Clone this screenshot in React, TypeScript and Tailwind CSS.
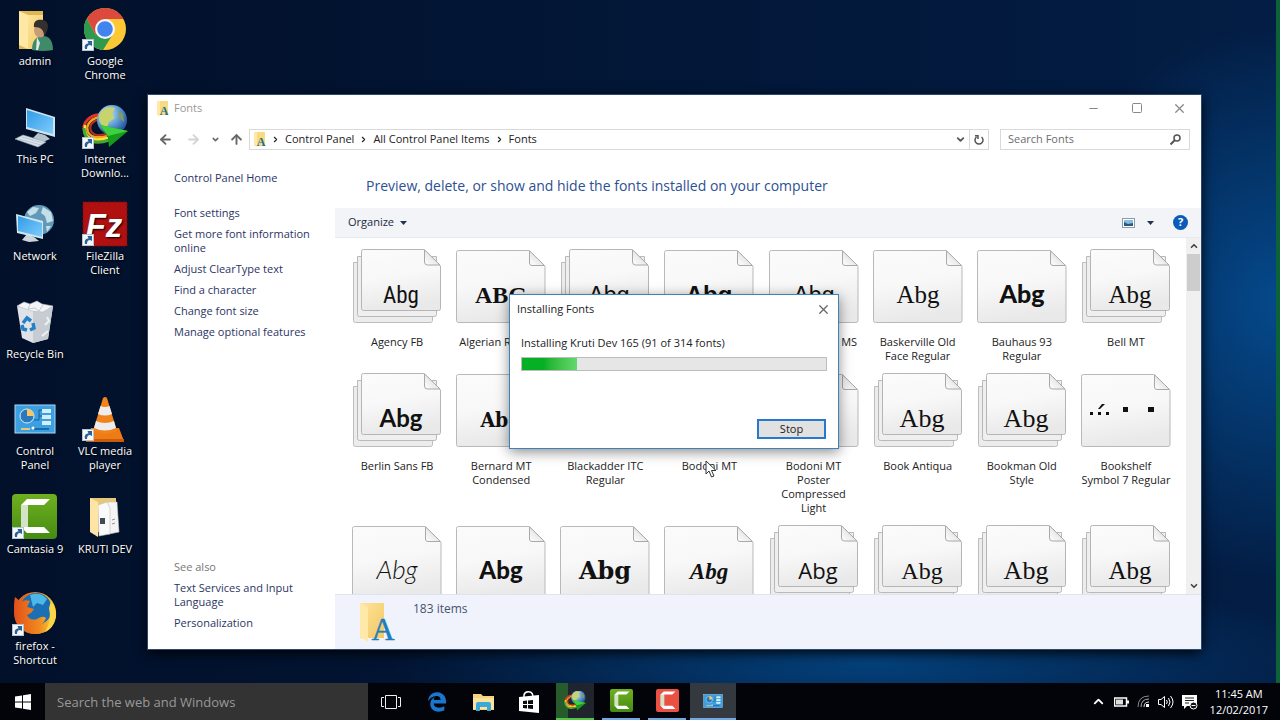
import { ReactNode } from "react";
import { FaEdgeLegacy } from "react-icons/fa";
import {
  ArrowLeft,
  ArrowRight,
  ArrowUp,
  ChevronDown,
  ChevronRight,
  ChevronUp,
  Minus,
  Square,
  X,
} from "lucide-react";

type FontTile = {
  name?: string;
  stack?: boolean;
  font?: string;
  size?: number;
  weight?: number;
  italic?: boolean;
  sample?: string;
  symbols?: boolean;
};

const fontTiles: FontTile[] = [
  { name: "Agency FB", stack: true, font: "Roboto Condensed, Open Sans Condensed, DejaVu Sans Condensed", size: 23 },
  { name: "Algerian Regular", font: "Liberation Serif", size: 24, weight: 700, sample: "ABG" },
  { stack: true, font: "Liberation Sans", size: 23 },
  { font: "Liberation Sans", size: 24, weight: 700 },
  { name: "Arial Unicode MS", font: "Liberation Sans", size: 23 },
  { name: "Baskerville Old\nFace Regular", font: "Liberation Serif", size: 25 },
  { name: "Bauhaus 93\nRegular", font: "Lato", size: 25, weight: 900 },
  { name: "Bell MT", stack: true, font: "Liberation Serif", size: 25 },
  { name: "Berlin Sans FB", stack: true, font: "Lato", size: 24, weight: 700 },
  { name: "Bernard MT\nCondensed", font: "DejaVu Serif Condensed", size: 21, weight: 700 },
  { name: "Blackadder ITC\nRegular", font: "Liberation Serif", size: 24, italic: true },
  { name: "Bodoni MT", stack: true, font: "Liberation Serif", size: 25 },
  { name: "Bodoni MT\nPoster\nCompressed\nLight", font: "Liberation Serif", size: 25 },
  { name: "Book Antiqua", stack: true, font: "Liberation Serif", size: 26 },
  { name: "Bookman Old\nStyle", stack: true, font: "Liberation Serif", size: 26 },
  { name: "Bookshelf\nSymbol 7 Regular", symbols: true },
  { font: "Lato", size: 26, weight: 300, italic: true },
  { font: "Lato", size: 24, weight: 900 },
  { font: "DejaVu Serif", size: 24, weight: 700 },
  { font: "Liberation Serif", size: 23, weight: 700, italic: true },
  { stack: true, font: "Open Sans", size: 22 },
  { stack: true, font: "Liberation Serif", size: 24 },
  { stack: true, font: "Liberation Serif", size: 26 },
  { stack: true, font: "Liberation Serif", size: 25 },
];

function FontPreview({ tile }: { tile: FontTile }) {
  return (
    <svg viewBox="0 0 90 74" className="h-[74px] w-[90px] shrink-0">
      {tile.stack ? (
        <>
          <path d="M1.5 13.5H80.5V71.5Q80.5 73.5 78.5 73.5H3.5Q1.5 73.5 1.5 71.5Z" fill="#ececec" stroke="#bdbdbd" />
          <path d="M5.5 7.5H84.5V65.5Q84.5 67.5 82.5 67.5H7.5Q5.5 67.5 5.5 65.5Z" fill="#efefef" stroke="#b9b9b9" />
          <path d="M9.5 2.5Q9.5 .5 11.5 .5H72L88.5 17V59.5Q88.5 61.5 86.5 61.5H11.5Q9.5 61.5 9.5 59.5Z" fill="url(#paper)" stroke="#b5b5b5" />
          <path d="M72.5 .8V13Q72.5 16 75.5 16H88Z" fill="url(#fold)" stroke="#a8a8a8" />
        </>
      ) : (
        <>
          <path d="M.5 3.5Q.5 1.5 2.5 1.5H73L89 17.5V71.5Q89 73.5 87 73.5H2.5Q.5 73.5 .5 71.5Z" fill="url(#paper)" stroke="#b9b9b9" />
          <path d="M73.5 1.8V14Q73.5 16.5 76 16.5H88.5Z" fill="url(#fold)" stroke="#a8a8a8" />
        </>
      )}
      {tile.symbols ? (
        <g fill="#111">
          <rect x="9" y="39" width="3" height="3" />
          <rect x="17" y="39" width="3" height="3" />
          <rect x="25" y="39" width="3" height="3" />
          <path d="M17 36L21 31H24L19 36Z" />
          <rect x="42" y="34" width="5" height="5" />
          <rect x="67" y="34" width="6" height="5" />
        </g>
      ) : (
        <text
          x={tile.stack ? 49 : 45}
          y="54"
          textAnchor="middle"
          fill="#111"
          fontFamily={`${tile.font}, sans-serif`}
          fontSize={tile.size}
          fontWeight={tile.weight || 400}
          fontStyle={tile.italic ? "italic" : "normal"}
        >
          {tile.sample || "Abg"}
        </text>
      )}
    </svg>
  );
}

function Gradients() {
  return (
    <svg className="absolute h-0 w-0" aria-hidden="true">
      <defs>
        <linearGradient id="paper" x1="0" y1="0" x2=".2" y2="1">
          <stop offset="0" stopColor="#fbfbfb" />
          <stop offset=".5" stopColor="#f8f8f8" />
          <stop offset="1" stopColor="#e9e9e9" />
        </linearGradient>
        <linearGradient id="fold" x1="0" y1="1" x2="1" y2="0">
          <stop offset="0" stopColor="#ffffff" />
          <stop offset="1" stopColor="#d2d2d2" />
        </linearGradient>
        <linearGradient id="screen" x1="0" y1="0" x2="1" y2="1">
          <stop offset="0" stopColor="#2f9be8" />
          <stop offset="1" stopColor="#7fcdfb" />
        </linearGradient>
        <radialGradient id="globe" cx=".35" cy=".3" r=".8">
          <stop offset="0" stopColor="#cfe6f7" />
          <stop offset=".5" stopColor="#5f9ed6" />
          <stop offset="1" stopColor="#173f8a" />
        </radialGradient>
        <linearGradient id="folder" x1="0" y1="0" x2="1" y2="1">
          <stop offset="0" stopColor="#ffe39a" />
          <stop offset="1" stopColor="#f0c964" />
        </linearGradient>
        <linearGradient id="fox" x1="0" y1="0" x2="1" y2="0">
          <stop offset="0" stopColor="#e2501b" />
          <stop offset=".6" stopColor="#f08a1d" />
          <stop offset="1" stopColor="#fbd53a" />
        </linearGradient>
        <linearGradient id="camtasia" x1="0" y1="0" x2="0" y2="1">
          <stop offset="0" stopColor="#6fb020" />
          <stop offset="1" stopColor="#458b12" />
        </linearGradient>
      </defs>
    </svg>
  );
}

function DesktopSvg({ children }: { children: ReactNode }) {
  return (
    <svg viewBox="0 0 46 46" className="h-[46px] w-[46px] overflow-visible">
      {children}
    </svg>
  );
}

function UserFolder() {
  return (
    <DesktopSvg>
      <path d="M7 3H31V41H7Z" fill="#dfb654" />
      <path d="M7 3L16 7V41L7 37Z" fill="#ffe8a4" />
      <path d="M16 7H31V41H16Z" fill="url(#folder)" />
      <path d="M20 42C20 33 24 28 31 28C38 28 41 34 41 42Q31 44 20 42Z" fill="#3f8a68" />
      <path d="M25 29L28 35L26 42H24Z" fill="#dcebe6" />
      <ellipse cx="28" cy="22" rx="6" ry="7.5" fill="#c99b79" />
      <path d="M22 19C21 12 27 11 31 12C37 13 37 20 34 25L32 28C32 22 29 19 22 19Z" fill="#34302e" />
    </DesktopSvg>
  );
}

function Chrome() {
  return (
    <DesktopSvg>
      <circle cx="23" cy="21" r="21" fill="#fcc934" />
      <path d="M23 21L13.5 26.5L4.8 10.5A21 21 0 0 0 21 42L31 26Z" fill="#2d9a50" />
      <path d="M23 11H41.5A21 21 0 0 0 4.8 10.5L13.5 26.5L23 21Z" fill="#db4a3c" />
      <circle cx="23" cy="21" r="10" fill="#f4f6f8" />
      <circle cx="23" cy="21" r="7.8" fill="#4284ee" />
    </DesktopSvg>
  );
}

function ThisPc() {
  return (
    <DesktopSvg>
      <path d="M26 27L33 29L38 33L31 36L21 32Z" fill="#b6c3cd" />
      <path d="M14 2L43 11V31L14 23Z" fill="#cfe3ee" />
      <path d="M15 4L41 12V28L15 21Z" fill="url(#screen)" />
      <path d="M3 33L11 29L34 36L26 41Z" fill="#dbe3ea" stroke="#94a5b3" strokeWidth=".6" />
      <path d="M7 33L29 39M10 31L31 37" stroke="#aab7c3" strokeWidth=".7" />
    </DesktopSvg>
  );
}

function DownloaderShapes() {
  return (
    <>
      <g fill="none">
        <path d="M22 9C8 7 -1 17 3 27C6 35 17 35 26 32" stroke="#e2342a" strokeWidth="3" />
        <path d="M22 11C11 10 3 18 6 26C9 32 17 32 25 30" stroke="#f5a21c" strokeWidth="2.5" />
        <path d="M22 13C13 13 6 18 9 25C11 29 17 30 24 28" stroke="#b8331f" strokeWidth="2" />
        <path d="M3 19C1 32 10 36 26 32" stroke="#f4e83b" strokeWidth="2.5" />
        <path d="M2 22C2 36 14 39 27 34" stroke="#43a832" strokeWidth="3" />
      </g>
      <circle cx="30" cy="14" r="15" fill="url(#globe)" />
      <path d="M17 9C20 2 28 0 33 2L30 8L33 12L27 16L25 22C20 21 16 16 17 9Z" fill="#c7d36c" />
      <path d="M36 4L41 8L42 16L37 12Z" fill="#7e9b68" />
      <path d="M18 19L46 25L27 41L26 31Z" fill="#169b1d" />
      <path d="M18 19L46 25L26 30Z" fill="#3fd03d" />
    </>
  );
}

function Downloader() {
  return (
    <DesktopSvg>
      <DownloaderShapes />
    </DesktopSvg>
  );
}

function Network() {
  return (
    <DesktopSvg>
      <circle cx="27" cy="17" r="15" fill="#6299b8" />
      <path d="M15 9L21 4L27 5L24 10L18 13ZM31 4L39 9L41 18L35 20L33 13L29 10ZM34 23L39 23L35 29Z" fill="#c5dfe9" />
      <path d="M15 31L22 34L27 38L17 39L10 37Z" fill="#ccd5dc" />
      <path d="M4 11L31 18V36L5 30Z" fill="#d2e6f0" />
      <path d="M6 13L30 20V34L6 28Z" fill="url(#screen)" />
    </DesktopSvg>
  );
}

function FileZilla() {
  return (
    <DesktopSvg>
      <rect x="1" y="-1" width="44" height="44" fill="#b01010" stroke="#7e0a0a" strokeDasharray="3 2" />
      <text x="22" y="34" textAnchor="middle" fill="#fff" fontFamily="Liberation Sans, sans-serif" fontSize="33" fontWeight="700" fontStyle="italic">
        Fz
      </text>
    </DesktopSvg>
  );
}

function RecycleBin() {
  return (
    <DesktopSvg>
      <path d="M5 5L21 8L41 5L36 38L21 42L10 37Z" fill="#dfe3e7" />
      <path d="M21 8L41 5L36 38L21 42Z" fill="#c6ccd2" />
      <path d="M5 5L12 1L18 3L25 0L30 3L41 5L31 11L20 10Z" fill="#f4f5f6" stroke="#b6bec5" strokeWidth=".6" />
      <path d="M18 3L16 8L23 7L27 10L31 4" stroke="#c4c9ce" fill="none" />
      <g fill="none" stroke="#2580cc" strokeWidth="3.5">
        <path d="M11 22L15 17L19 20" />
        <path d="M21 22L22 27L18 29" />
        <path d="M15 29L11 28L10 24" />
      </g>
      <path d="M35 16L37 20L33 24M30 35L36 30" stroke="#eef1f3" strokeWidth="2" fill="none" />
    </DesktopSvg>
  );
}

function PanelShapes() {
  return (
    <>
      <rect x="3" y="7" width="40" height="28" fill="#3b9fe0" stroke="#a7d9f5" />
      <circle cx="15" cy="18" r="7" fill="#2b78bd" stroke="#d4effc" />
      <path d="M15 18V11A7 7 0 0 1 22 18Z" fill="#f7c566" />
      <path d="M22 22H27V12H30M27 18H30" stroke="#1c5f9b" fill="none" />
      <rect x="30" y="11" width="9" height="4" fill="#d3effc" />
      <rect x="30" y="17" width="9" height="4" fill="#d3effc" />
      <rect x="30" y="23" width="9" height="4" fill="#d3effc" />
      <path d="M9 31H18" stroke="#eac479" strokeWidth="2" />
      <path d="M22 31H37" stroke="#196bb0" strokeWidth="2" />
      <circle cx="21" cy="30" r="1.5" fill="#fff" />
    </>
  );
}

function ControlPanel() {
  return (
    <DesktopSvg>
      <PanelShapes />
    </DesktopSvg>
  );
}

function Vlc() {
  return (
    <DesktopSvg>
      <path d="M9 30H37L42 43H4Z" fill="#ee7c16" />
      <path d="M4 41H42V44H4Z" fill="#c85c0c" />
      <path d="M21 0Q23-2 25 0L35 33Q23 39 11 33Z" fill="#f2821b" />
      <path d="M18.5 8Q23 10 27.5 8L30 16Q23 19 16 16Z" fill="#ededed" />
      <path d="M14 23Q23 27 32 23L34 30Q23 35 12 30Z" fill="#ededed" />
    </DesktopSvg>
  );
}

function CamtasiaShapes({ fill }: { fill: string }) {
  return (
    <>
      <rect y="-2" width="45" height="45" rx="4" fill={fill} />
      <path d="M9 9L15 3H38L32 9H16V31H32L38 37H15L9 31Z" fill="#fff" />
      <path d="M9 9H16V31H9Z" fill="#c9dcb8" fillOpacity=".8" />
    </>
  );
}

function Camtasia() {
  return (
    <DesktopSvg>
      <CamtasiaShapes fill="url(#camtasia)" />
    </DesktopSvg>
  );
}

function DocumentFolder() {
  return (
    <DesktopSvg>
      <path d="M8 2H34V36H8Z" fill="#e8c777" />
      <path d="M25 6L35 6L37 36L27 38Z" fill="#f4f4f4" stroke="#c5c5c5" strokeWidth=".6" />
      <path d="M16 9L25 6L28 12V38L17 40Z" fill="#fafafa" stroke="#bdbdbd" strokeWidth=".6" />
      <rect x="18" y="22" width="5" height="6" fill="#454b54" />
      <path d="M30 24L33 23M30 28L33 27" stroke="#8e949a" />
      <path d="M8 2L16 6V41L8 36Z" fill="#ffe5a5" />
    </DesktopSvg>
  );
}

function Firefox() {
  return (
    <DesktopSvg>
      <circle cx="23" cy="20" r="21" fill="url(#fox)" />
      <circle cx="24" cy="16" r="16" fill="#1b6fb5" />
      <path d="M18 2Q28-2 35 6L31 12L25 10L21 14Z" fill="#4bb8e8" />
      <path d="M3 4L9 9Q13 6 18 8L15 14L22 16L19 20L15 22Q18 28 25 26Q31 22 34 25Q30 35 20 33Q26 38 35 33Q42 27 40 13L38 7Q45 15 44 24Q41 40 24 41Q6 40 3 25Q1 12 3 4Z" fill="url(#fox)" />
      <path d="M39 8Q45 17 43 26Q41 35 33 39Q40 27 37 15Z" fill="#fbd647" />
    </DesktopSvg>
  );
}

function ShortcutArrow() {
  return (
    <svg viewBox="0 0 12 12" className="h-3 w-3">
      <rect x=".5" y=".5" width="11" height="11" fill="#f5f8fa" stroke="#b8c4cd" />
      <path d="M3 10C2 6 4 4.5 6.5 4.5L5.5 2H10V7L8 6C6 6 5 7.5 5 10Z" fill="#2c6196" />
    </svg>
  );
}

function FontFolder({ className }: { className: string }) {
  return (
    <svg viewBox="0 0 36 40" className={className}>
      <path d="M1 1H25V36H1Z" fill="url(#folder)" />
      <path d="M1 1L9 5V40L1 35Z" fill="#ffe9a8" />
      <text x="24" y="38" textAnchor="middle" fill="#1f7dbc" stroke="#1f7dbc" strokeWidth=".5" fontFamily="Liberation Serif, serif" fontSize="32">A</text>
    </svg>
  );
}

function SmallFontFolder({ className }: { className: string }) {
  return (
    <svg viewBox="0 0 12 15" className={className}>
      <path d="M0 0H11V14H0Z" fill="#f8da80" />
      <path d="M0 0H3V15L0 14Z" fill="#ffe9a8" />
      <text x="7" y="14" textAnchor="middle" fill="#1f6f8f" fontFamily="Liberation Serif, serif" fontSize="12" fontWeight="700">A</text>
    </svg>
  );
}

type DesktopItem = { label: string; icon: ReactNode; shortcut?: boolean } | null;

const desktopItems: DesktopItem[] = [
  { label: "admin", icon: <UserFolder /> },
  { label: "Google\nChrome", icon: <Chrome />, shortcut: true },
  { label: "This PC", icon: <ThisPc /> },
  { label: "Internet\nDownlo...", icon: <Downloader />, shortcut: true },
  { label: "Network", icon: <Network /> },
  { label: "FileZilla\nClient", icon: <FileZilla />, shortcut: true },
  { label: "Recycle Bin", icon: <RecycleBin /> },
  null,
  { label: "Control\nPanel", icon: <ControlPanel /> },
  { label: "VLC media\nplayer", icon: <Vlc />, shortcut: true },
  { label: "Camtasia 9", icon: <Camtasia />, shortcut: true },
  { label: "KRUTI DEV", icon: <DocumentFolder /> },
  { label: "firefox -\nShortcut", icon: <Firefox />, shortcut: true },
];

function Desktop() {
  return (
    <ul className="grid flex-1 grid-cols-[70px_70px] grid-rows-7">
      {desktopItems.map((item, i) => (
        <li key={i}>
          {item && (
            <button className="flex w-full flex-col items-center pt-2 text-[11px] leading-[14px] text-white [text-shadow:1px_1px_2px_#000]">
              <span className="relative">
                {item.icon}
                {item.shortcut && (
                  <span className="absolute top-[31px] left-0">
                    <ShortcutArrow />
                  </span>
                )}
              </span>
              <span className="whitespace-pre-line">{item.label}</span>
            </button>
          )}
        </li>
      ))}
    </ul>
  );
}

const sideLinks = [
  "Font settings",
  "Get more font information online",
  "Adjust ClearType text",
  "Find a character",
  "Change font size",
  "Manage optional features",
];

function Sidebar() {
  return (
    <aside className="flex w-[187px] shrink-0 flex-col justify-between pt-[15px] pr-5 pb-[19px] pl-[26px] text-[11px] leading-[14px] text-[#2c3565]">
      <nav className="flex flex-col items-start gap-[7px]">
        <a href="#home" className="mb-[14px]">Control Panel Home</a>
        {sideLinks.map((link) => (
          <a href="#link" key={link}>{link}</a>
        ))}
      </nav>
      <nav className="flex flex-col items-start gap-[7px]">
        <span className="text-[#777]">See also</span>
        <a href="#text">Text Services and Input Language</a>
        <a href="#personalization">Personalization</a>
      </nav>
    </aside>
  );
}

function Crumb({ label }: { label: string }) {
  return (
    <>
      <ChevronRight size={9} strokeWidth={3} className="mx-1" />
      <button className="px-px">{label}</button>
    </>
  );
}

function AddressRow() {
  return (
    <div className="flex h-[21px] items-center pr-[11px] text-[#666]">
      <div className="flex w-[101px] items-center pl-[10px]">
        <button aria-label="Back" className="w-7"><ArrowLeft size={15} strokeWidth={3} /></button>
        <button aria-label="Forward" className="w-[25px] text-[#d4d4d4]"><ArrowRight size={15} strokeWidth={3} /></button>
        <button aria-label="Recent locations" className="w-[18px]"><ChevronDown size={9} strokeWidth={4} /></button>
        <button aria-label="Up"><ArrowUp size={15} strokeWidth={3} /></button>
      </div>
      <div className="flex h-full flex-1 items-center border border-[#d9d9d9] text-[11px] text-[#222]">
        <SmallFontFolder className="mr-px ml-1 h-[15px] w-3" />
        <Crumb label="Control Panel" />
        <Crumb label="All Control Panel Items" />
        <Crumb label="Fonts" />
        <button aria-label="Previous locations" className="ml-auto px-[3px] text-[#555]"><ChevronDown size={11} strokeWidth={4} /></button>
        <button aria-label="Refresh" className="flex h-full w-[19px] items-center justify-center border-l border-[#d9d9d9] text-[#555]">
          <svg viewBox="0 0 10 11" className="h-[11px] w-[10px]" fill="none" stroke="currentColor" strokeWidth="1.5">
            <path d="M7.5 3A4 4 0 1 1 2.5 3M1 1.7H4V5" />
          </svg>
        </button>
      </div>
      <div className="ml-[11px] flex h-full w-[190px] items-center border border-[#d9d9d9] pr-2 pl-[7px]">
        <input aria-label="Search Fonts" placeholder="Search Fonts" className="min-w-0 flex-1 text-[11px] outline-none placeholder:text-[#6d6d6d]" />
        <svg viewBox="0 0 11 11" className="h-[11px] w-[11px]" fill="none" stroke="#555" strokeWidth="1.5">
          <circle cx="7" cy="4" r="3" />
          <path d="M5 6L.5 10.5" strokeWidth="2" />
        </svg>
      </div>
    </div>
  );
}

function Toolbar() {
  return (
    <div className="flex h-[30px] shrink-0 items-center border-b border-[#e6eaf1] bg-[#f2f4f8] px-[13px] text-[11px] text-[#222b3f]">
      <button className="flex items-center gap-[6px]">
        Organize
        <svg viewBox="0 0 7 4" className="h-1 w-[7px]"><path d="M0 0H7L3.5 4Z" fill="#27334d" /></svg>
      </button>
      <button aria-label="Change view" className="ml-auto flex items-center gap-3">
        <svg viewBox="0 0 13 10" className="h-[10px] w-[13px]">
          <rect x=".5" y=".5" width="12" height="9" fill="#fff" stroke="#8d9cac" />
          <rect x="2" y="2" width="9" height="6" fill="#86bde4" />
          <path d="M2 8V4L6 6L11 5V8Z" fill="#2d5877" />
        </svg>
        <svg viewBox="0 0 7 4" className="h-1 w-[7px]"><path d="M0 0H7L3.5 4Z" fill="#27334d" /></svg>
      </button>
      <button aria-label="Help" className="ml-[19px] flex h-[15px] w-[15px] items-center justify-center rounded-full bg-[#0b5cb8] text-[11px] font-bold text-white">
        ?
      </button>
    </div>
  );
}

function FontsWindow() {
  return (
    <section className="absolute top-[95px] right-[79px] bottom-[71px] left-[148px] flex flex-col bg-white shadow-[0_0_0_1px_#2d486c,0_3px_12px_#000]">
      <header className="flex h-[26px] shrink-0 items-center pl-[9px] text-[11px] text-[#999]">
        <SmallFontFolder className="mr-[5px] h-[15px] w-3" />
        <h1>Fonts</h1>
        <div className="ml-auto flex h-full text-[#888]">
          <button aria-label="Minimize" className="flex w-[43px] items-center justify-center"><Minus size={13} strokeWidth={2} /></button>
          <button aria-label="Maximize" className="flex w-[43px] items-center justify-center"><Square size={12} strokeWidth={2} /></button>
          <button aria-label="Close" className="flex w-[43px] items-center justify-center"><X size={15} strokeWidth={2} /></button>
        </div>
      </header>
      <div className="pt-2">
        <AddressRow />
      </div>
      <div className="flex min-h-0 flex-1 pt-[6px]">
        <Sidebar />
        <main className="flex min-w-0 flex-1 flex-col">
          <h2 className="pt-5 pb-3 pl-[31px] text-sm leading-5 text-[#2d4f93]">
            Preview, delete, or show and hide the fonts installed on your computer
          </h2>
          <Toolbar />
          <div className="flex min-h-0 flex-1">
            <ul className="grid min-w-0 flex-1 grid-cols-8 content-start gap-y-[10px] overflow-hidden pt-[11px] pr-2 pl-[10px]">
              {fontTiles.map((tile, i) => (
                <li key={i} className="flex flex-col items-center gap-3 text-center text-[11px] leading-[14px] text-[#222]">
                  <FontPreview tile={tile} />
                  {tile.name && <span className="whitespace-pre-line">{tile.name}</span>}
                </li>
              ))}
            </ul>
            <div className="flex w-[15px] flex-col items-center bg-[#f0f0f0] text-[#444]">
              <button aria-label="Scroll up" className="py-[3px]"><ChevronUp size={10} strokeWidth={4} /></button>
              <div className="h-[37px] w-[13px] bg-[#cdcdcd]" />
              <button aria-label="Scroll down" className="mt-auto py-[3px]"><ChevronDown size={10} strokeWidth={4} /></button>
            </div>
          </div>
          <footer className="flex h-[55px] shrink-0 gap-[18px] border-t border-[#dfe3eb] bg-[#f0f3fb] pt-[6px] pl-6 text-xs text-[#46536c]">
            <FontFolder className="h-[42px] w-9" />
            <p>183 items</p>
          </footer>
        </main>
      </div>
    </section>
  );
}

function InstallDialog() {
  return (
    <div role="dialog" aria-labelledby="install-title" className="absolute top-[294px] left-[509px] flex h-[155px] w-[330px] flex-col border border-[#3c83b9] bg-white text-[11px] text-[#222] shadow-[0_3px_12px_rgba(0,0,0,0.45)]">
      <header className="flex h-7 items-center justify-between px-[7px]">
        <h2 id="install-title">Installing Fonts</h2>
        <button aria-label="Close"><X size={15} strokeWidth={2} className="text-[#666]" /></button>
      </header>
      <div className="flex flex-1 flex-col px-[11px] pt-3 pb-[9px]">
        <p className="leading-4">Installing Kruti Dev 165 (91 of 314 fonts)</p>
        <div role="progressbar" aria-label="Installing" className="mt-[6px] h-[14px] border border-[#bcbcbc] bg-[#e6e6e6]">
          <div className="h-full w-[18%] bg-linear-to-r from-[#06b025] from-40% to-[#63d86d]" />
        </div>
        <button className="mt-auto mr-px h-5 w-[69px] self-end border-2 border-[#2878cc] bg-[#e1e1e1] leading-4">Stop</button>
      </div>
    </div>
  );
}

function TaskButton({ label, className, children }: { label: string; className?: string; children: ReactNode }) {
  return (
    <button aria-label={label} className={`flex h-full items-center justify-center ${className || "w-[46px]"}`}>
      {children}
    </button>
  );
}

function Taskbar() {
  return (
    <footer className="flex h-[37px] shrink-0 items-center bg-[#020409] text-white">
      <TaskButton label="Start" className="w-[45px]">
        <svg viewBox="0 0 16 16" className="h-4 w-4" fill="#fff">
          <path d="M0 2.5L7 1.5V7.5H0ZM8 1.3L16 0V7.5H8ZM0 8.5H7V14.5L0 13.5ZM8 8.5H16V16L8 14.7Z" />
        </svg>
      </TaskButton>
      <input aria-label="Search the web and Windows" placeholder="Search the web and Windows" className="h-full w-[323px] bg-[#333] px-3 text-[13px] outline-none placeholder:text-[#999]" />
      <TaskButton label="Task View">
        <svg viewBox="0 0 20 14" className="h-[14px] w-5" fill="none" stroke="#eee">
          <path d="M4.5 .5H15.5V13.5H4.5ZM3 2.5H.5V11.5H3M17 2.5H19.5V11.5H17" />
        </svg>
      </TaskButton>
      <TaskButton label="Edge">
        <FaEdgeLegacy size={20} className="text-[#1878cf]" />
      </TaskButton>
      <TaskButton label="File Explorer">
        <svg viewBox="0 0 21 18" className="h-[18px] w-[21px]">
          <path d="M0 1H8L10 3H21V17H0Z" fill="#f7d37c" />
          <path d="M0 5H21V16H0Z" fill="#fce39c" />
          <path d="M3 18V11Q3 9 5 9H16Q18 9 18 11V18H14V14H7V18Z" fill="#3ba9d8" />
        </svg>
      </TaskButton>
      <TaskButton label="Store">
        <svg viewBox="0 0 20 22" className="h-[22px] w-5">
          <path d="M5 7V4Q6 0 11 1Q14 2 14 6" fill="none" stroke="#fff" strokeWidth="1.5" />
          <path d="M0 6L20 4V22L0 20Z" fill="#fff" />
          <path d="M4 10L8 9.5V13H4ZM9 9.5L14 9V13H9ZM4 14H8V17.5L4 17ZM9 14H14V18L9 17.5Z" fill="#090b10" />
        </svg>
      </TaskButton>
      <TaskButton label="Internet Download Manager" className="mx-1 w-[38px] border-b-2 border-[#55c545] bg-linear-to-r from-[#285b2c] from-32% to-[#20252d] to-32%">
        <svg viewBox="0 0 46 42" className="h-5 w-[22px]"><DownloaderShapes /></svg>
      </TaskButton>
      <TaskButton label="Camtasia" className="mx-1 w-[38px] border-b-2 border-[#74a7df]">
        <svg viewBox="0 -2 45 45" className="h-[23px] w-[23px]"><CamtasiaShapes fill="url(#camtasia)" /></svg>
      </TaskButton>
      <TaskButton label="Camtasia Recorder" className="mx-1 w-[38px] border-b-2 border-[#74a7df]">
        <svg viewBox="0 -2 45 45" className="h-[23px] w-[23px]"><CamtasiaShapes fill="#ea5145" /></svg>
      </TaskButton>
      <TaskButton label="Fonts" className="w-[46px] border-b-2 border-[#74a7df] bg-[#34383f]">
        <svg viewBox="2 6 42 30" className="h-[14px] w-5"><PanelShapes /></svg>
      </TaskButton>
      <div className="ml-auto flex h-full items-center gap-2 pr-3">
        <button aria-label="Show hidden icons"><ChevronUp size={15} strokeWidth={3} /></button>
        <svg viewBox="0 0 15 10" className="h-[10px] w-[15px]" fill="none" stroke="#fff">
          <rect x=".5" y="1" width="12" height="8" strokeWidth="1.5" />
          <path d="M14 3.5V6.5" strokeWidth="2" />
          <rect x="2" y="2.5" width="7" height="5" fill="#ddd" stroke="none" />
        </svg>
        <svg viewBox="0 0 13 13" className="h-[13px] w-[13px]" fill="none" stroke="#888">
          <path d="M1 12Q1 1 12 1" />
          <path d="M4 12Q4 4 12 4" stroke="#aaa" />
          <path d="M7 12Q7 7 12 7" stroke="#ddd" />
          <rect x="9" y="9" width="3" height="3" fill="#fff" stroke="none" />
        </svg>
        <svg viewBox="0 0 16 14" className="h-[14px] w-4" fill="none" stroke="#fff">
          <path d="M.5 4.5H3L6.5 1.5V12.5L3 9.5H.5Z" />
          <path d="M8.5 5Q10 7 8.5 9M10.5 3Q13.5 7 10.5 11M12.5 1Q17.5 7 12.5 13" />
        </svg>
        <svg viewBox="0 0 16 16" className="h-4 w-4">
          <path d="M0 1H15V12H5L2 15V12H0Z" fill="#fff" />
          <path d="M3 4H12M3 6.5H12M3 9H7" stroke="#222" />
          <circle cx="11.5" cy="11.5" r="3.5" fill="#111" stroke="#fff" />
          <path d="M9.5 11.5H13.5" stroke="#fff" />
        </svg>
        <time className="ml-1 text-center text-[11px] leading-4">
          11:45 AM
          <br />
          12/02/2017
        </time>
      </div>
    </footer>
  );
}

function App() {
  return (
    <div className="relative flex h-screen min-h-[720px] flex-col overflow-hidden bg-[#021330] bg-[radial-gradient(240px_280px_at_100%_42%,#05498c_0%,#04386f_40%,transparent_100%),radial-gradient(480px_90px_at_68%_92%,#04417b_0%,transparent_100%),linear-gradient(90deg,#02102a,#031d44)] font-['Open_Sans','Noto_Sans',sans-serif]">
      <Gradients />
      <div className="flex flex-1 justify-between">
        <Desktop />
        <div className="w-1 bg-[#0c6337]" />
      </div>
      <Taskbar />
      <FontsWindow />
      <InstallDialog />
      <svg viewBox="0 0 12 18" className="absolute top-[460px] left-[705px] h-[18px] w-3">
        <path d="M1 1V14L4 11L6.5 17L9 16L6.5 10.5H11Z" fill="#fff" stroke="#333" />
      </svg>
    </div>
  );
}

export default App;
